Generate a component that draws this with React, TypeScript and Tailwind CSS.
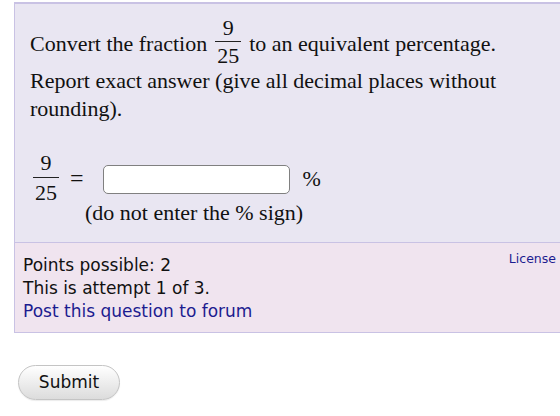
import React from 'react'

// Stacked fraction, drawn the way the math renderer lays it out.
// The box baseline is the numerator's, so `raise` lifts it above the text line.
function Frac({ num, den, raise = '', tight = false }: { num: string; den: string; raise?: string; tight?: boolean }) {
  return (
    <span className={`inline-flex flex-col items-center leading-none text-[22px] ${raise}`}>
      <span className={tight ? 'px-[2px] pb-[2px]' : 'px-[2px] pb-[3px]'}>{num}</span>
      <span className="self-stretch h-px bg-[#222]" />
      <span className={tight ? 'px-[2px] pt-[3px]' : 'px-[2px] pt-[4px]'}>{den}</span>
    </span>
  )
}

export default function App() {
  return (
    <div className="w-[560px] h-[416px] overflow-hidden bg-white pt-[2px]">
      {/* question body */}
      <div
        className="ml-[14px] border-l border-t-2 border-b border-[#c9c2e4] bg-[#e9e6f2] pl-[15px] pr-2 pt-[13px] pb-[15px] text-[#111] text-[22px] leading-[28px]"
        style={{ fontFamily: '"Liberation Serif", "Times New Roman", serif' }}
      >
        <p>
          Convert the fraction
          <span className="mx-[8px]">
            <Frac num="9" den="25" raise="align-[16px]" tight />
          </span>
          to an equivalent percentage.
        </p>
        <p>Report exact answer (give all decimal places without rounding).</p>

        <div className="mt-[29px] flex items-center">
          <span className="ml-[3px] flex">
            <Frac num="9" den="25" />
          </span>
          <span className="ml-[11px] text-[24px]">=</span>
          <span className="ml-[19px] mt-[2px] w-[187px] h-[29px] rounded-[5px] border border-[#808080] bg-white" />
          <span className="ml-[13px] mt-[2px]">%</span>
        </div>
        <p className="ml-[55px] -mt-[5px]">(do not enter the % sign)</p>
      </div>

      {/* attempt info */}
      <div
        className="ml-[14px] border-l border-b border-[#c9c2e4] bg-[#f0e4ef] pl-[8px] pr-[4px] pt-[11px] pb-[9px] text-[17px] leading-[23px] text-[#111] flex"
        style={{ fontFamily: '"DejaVu Sans", Verdana, sans-serif' }}
      >
        <div className="flex-1">
          <p>Points possible: 2</p>
          <p>This is attempt 1 of 3.</p>
          <p className="text-[#1c1c90]">Post this question to forum</p>
        </div>
        <span className="-mt-[4px] text-[12.5px] leading-[18px] text-[#1c1c90]">License</span>
      </div>

      <button
        className="ml-[18px] mt-[32px] w-[102px] h-[35px] rounded-full border border-[#c4c4c4] bg-gradient-to-b from-white to-[#dcdcdc] text-[17px] text-[#111] shadow-[0_1px_1px_rgba(0,0,0,0.08)]"
        style={{ fontFamily: '"DejaVu Sans", Verdana, sans-serif' }}
      >
        Submit
      </button>
    </div>
  )
}
